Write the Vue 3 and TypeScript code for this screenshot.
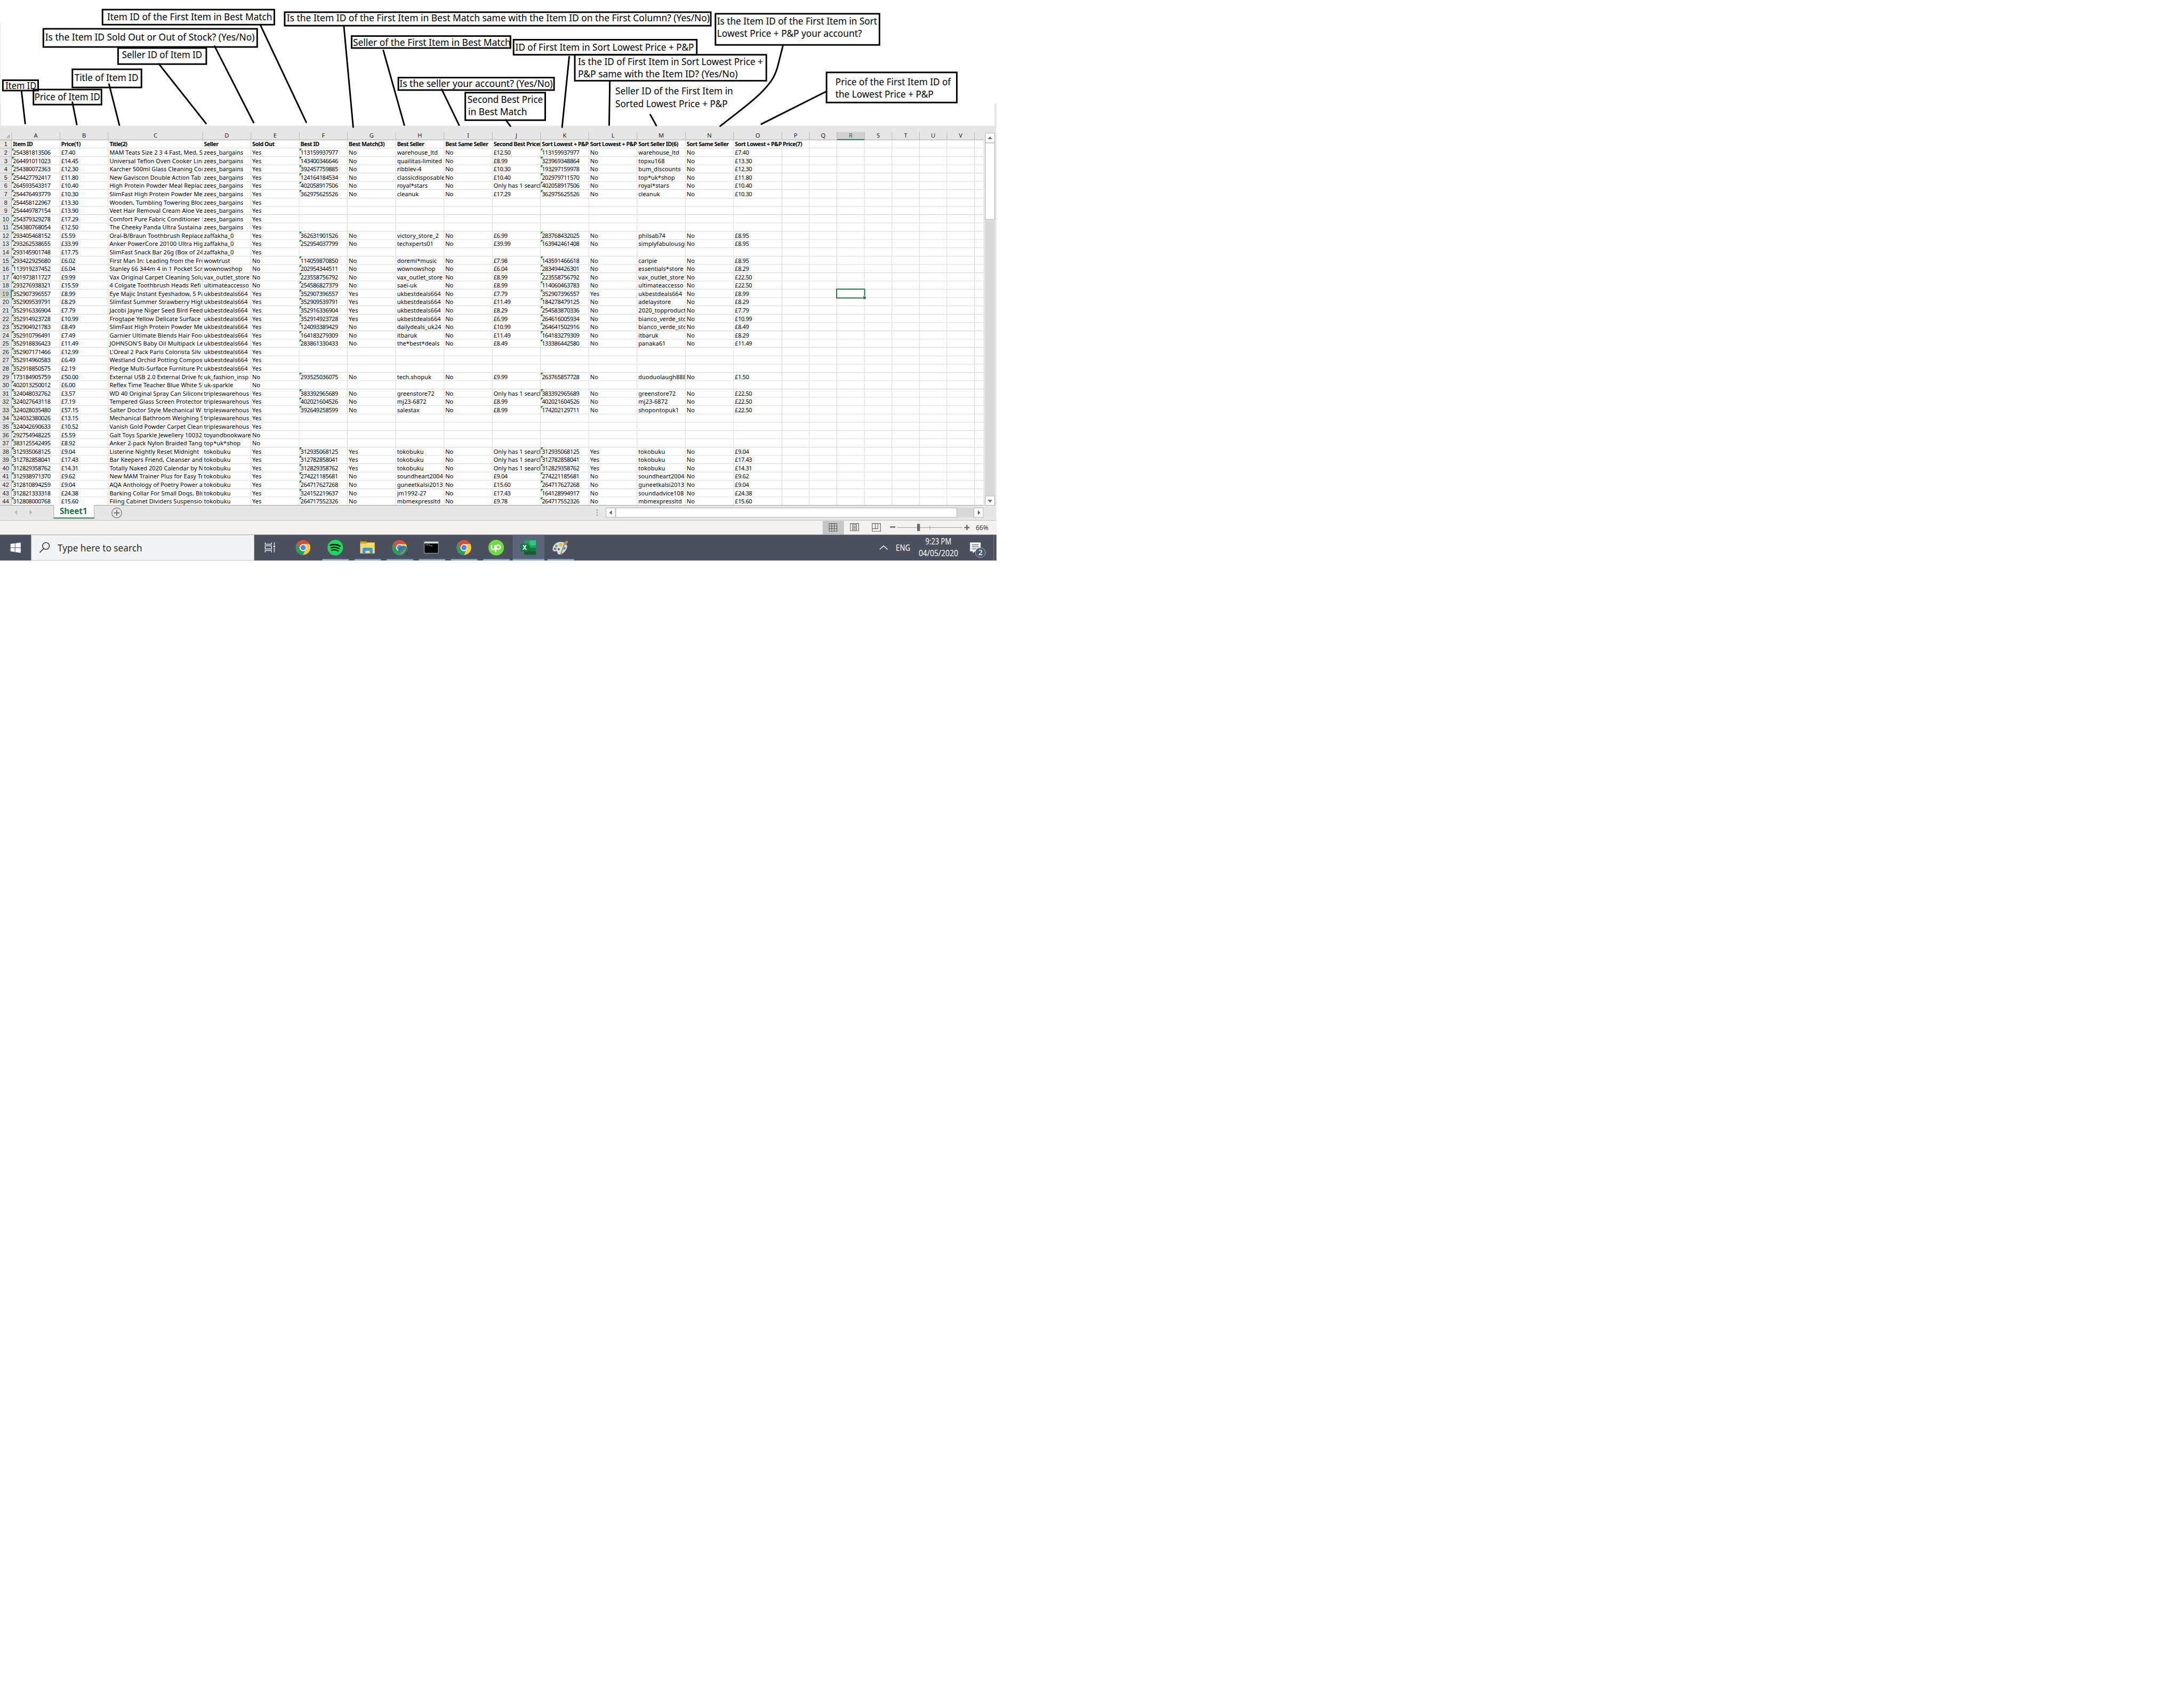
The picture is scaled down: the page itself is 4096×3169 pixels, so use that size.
<script setup lang="ts">
interface Col { name: string; w: number }
interface Note { box?: [number, number, number, number]; lines: [string, number, number, number][] }

const SCALE = 4096 / 4208

const cols: Col[] = [
  { name: 'A', w: 93 }, { name: 'B', w: 93 }, { name: 'C', w: 182 },
  ...'DEFGHIJKLMNO'.split('').map((name) => ({ name, w: 93 })),
  ...'PQRSTUV'.split('').map((name) => ({ name, w: 53 })),
  { name: '', w: 17 },
]

const headings = 'Item ID|Price(1)|Title(2)|Seller|Sold Out|Best ID|Best Match(3)|Best Seller|Best Same Seller|Second Best Price(4)|Sort Lowest + P&P(5)|Sort Lowest + P&P(5)|Sort Seller ID(6)|Sort Same Seller|Sort Lowest + P&P Price(7)'

const source = `254381813506|£7.40|MAM Teats Size 2 3 4 Fast, Med, Slow|zees_bargains|Yes|113159937977|No|warehouse_ltd|No|£12.50|113159937977|No|warehouse_ltd|No|£7.40
264491011023|£14.45|Universal Teflon Oven Cooker Liner|zees_bargains|Yes|143400346646|No|quailitas-limited|No|£8.99|323969348864|No|topxu168|No|£13.30
254380072363|£12.30|Karcher 500ml Glass Cleaning Conc|zees_bargains|Yes|392457759885|No|ribblev-4|No|£10.30|193297159978|No|bum_discounts|No|£12.30
254427792417|£11.80|New Gaviscon Double Action Tab|zees_bargains|Yes|124164184534|No|classicdisposables|No|£10.40|202979711570|No|top*uk*shop|No|£11.80
264593543317|£10.40|High Protein Powder Meal Replace|zees_bargains|Yes|402058917506|No|royal*stars|No|Only has 1 search|402058917506|No|royal*stars|No|£10.40
254476493779|£10.30|SlimFast High Protein Powder Me|zees_bargains|Yes|362975625526|No|cleanuk|No|£17.29|362975625526|No|cleanuk|No|£10.30
254458122967|£13.30|Wooden, Tumbling Towering Blocks|zees_bargains|Yes
254449787154|£13.90|Veet Hair Removal Cream Aloe Vera|zees_bargains|Yes
254379329278|£17.29|Comfort Pure Fabric Conditioner Lily|zees_bargains|Yes
254380768054|£12.50|The Cheeky Panda Ultra Sustaina|zees_bargains|Yes
293405468152|£5.59|Oral-B/Braun Toothbrush Replacement|zaffakha_0|Yes|362631901526|No|victory_store_2|No|£6.99|283768432025|No|philsab74|No|£8.95
293262538655|£33.99|Anker PowerCore 20100 Ultra High|zaffakha_0|Yes|252954037799|No|techxperts01|No|£39.99|163942461408|No|simplyfabulousgifts|No|£8.95
293145901748|£17.75|SlimFast Snack Bar 26g (Box of 24,|zaffakha_0|Yes
293422925680|£6.02|First Man In: Leading from the Front|wowtrust|No|114059870850|No|doremi*music|No|£7.98|143591466618|No|carlpie|No|£8.95
113919237452|£6.04|Stanley 66 344m 4 in 1 Pocket Scre|wownowshop|No|202954344511|No|wownowshop|No|£6.04|283494426301|No|essentials*store|No|£8.29
401973811727|£9.99|Vax Original Carpet Cleaning Solution|vax_outlet_store|No|223558756792|No|vax_outlet_store|No|£8.99|223558756792|No|vax_outlet_store|No|£22.50
293276938321|£15.59|4 Colgate Toothbrush Heads Refi|ultimateaccesso|No|254586827379|No|saei-uk|No|£8.99|114060463783|No|ultimateaccesso|No|£22.50
352907396557|£8.99|Eye Majic Instant Eyeshadow, 5 Pack|ukbestdeals664|Yes|352907396557|Yes|ukbestdeals664|No|£7.79|352907396557|Yes|ukbestdeals664|No|£8.99
352909539791|£8.29|Slimfast Summer Strawberry High|ukbestdeals664|Yes|352909539791|Yes|ukbestdeals664|No|£11.49|184278479125|No|adelaystore|No|£8.29
352916336904|£7.79|Jacobi Jayne Niger Seed Bird Feeder|ukbestdeals664|Yes|352916336904|Yes|ukbestdeals664|No|£8.29|254583870336|No|2020_topproducts|No|£7.79
352914923728|£10.99|Frogtape Yellow Delicate Surface|ukbestdeals664|Yes|352914923728|Yes|ukbestdeals664|No|£6.99|264616005934|No|bianco_verde_store|No|£10.99
352904921783|£8.49|SlimFast High Protein Powder Me|ukbestdeals664|Yes|124093389429|No|dailydeals_uk24|No|£10.99|264641502916|No|bianco_verde_store|No|£8.49
352910796491|£7.49|Garnier Ultimate Blends Hair Food|ukbestdeals664|Yes|164183279309|No|itbaruk|No|£11.49|164183279309|No|itbaruk|No|£8.29
352918836423|£11.49|JOHNSON'S Baby Oil Multipack Le|ukbestdeals664|Yes|283861330433|No|the*best*deals|No|£8.49|133386442580|No|panaka61|No|£11.49
352907171466|£12.99|L'Oreal 2 Pack Paris Colorista Silv|ukbestdeals664|Yes
352914960583|£6.49|Westland Orchid Potting Compost|ukbestdeals664|Yes
352918850575|£2.19|Pledge Multi-Surface Furniture Polish|ukbestdeals664|Yes
173184905759|£50.00|External USB 2.0 External Drive fo|uk_fashion_insp|No|293525036075|No|tech.shopuk|No|£9.99|263765857728|No|duoduolaugh888|No|£1.50
402013250012|£6.00|Reflex Time Teacher Blue White Str|uk-sparkle|No
324048032762|£3.57|WD 40 Original Spray Can Silicone|tripleswarehous|Yes|383392965689|No|greenstore72|No|Only has 1 search|383392965689|No|greenstore72|No|£22.50
324027643118|£7.19|Tempered Glass Screen Protector|tripleswarehous|Yes|402021604526|No|mj23-6872|No|£8.99|402021604526|No|mj23-6872|No|£22.50
324028035480|£57.15|Salter Doctor Style Mechanical W|tripleswarehous|Yes|392649258599|No|salestax|No|£8.99|174202129711|No|shopontopuk1|No|£22.50
324032380026|£13.15|Mechanical Bathroom Weighing Sc|tripleswarehous|Yes
324042690633|£10.52|Vanish Gold Powder Carpet Clean|tripleswarehous|Yes
292754948225|£5.59|Galt Toys Sparkle Jewellery 10032|toyandbookware|No
383125542495|£8.92|Anker 2-pack Nylon Braided Tang|top*uk*shop|No
312935068125|£9.04|Listerine Nightly Reset Midnight|tokobuku|Yes|312935068125|Yes|tokobuku|No|Only has 1 search|312935068125|Yes|tokobuku|No|£9.04
312782858041|£17.43|Bar Keepers Friend, Cleanser and|tokobuku|Yes|312782858041|Yes|tokobuku|No|Only has 1 search|312782858041|Yes|tokobuku|No|£17.43
312829358762|£14.31|Totally Naked 2020 Calendar by N|tokobuku|Yes|312829358762|Yes|tokobuku|No|Only has 1 search|312829358762|Yes|tokobuku|No|£14.31
312938971370|£9.62|New MAM Trainer Plus for Easy Tra|tokobuku|Yes|274221185681|No|soundheart2004|No|£9.04|274221185681|No|soundheart2004|No|£9.62
312810894259|£9.04|AQA Anthology of Poetry Power and|tokobuku|Yes|264717627268|No|guneetkalsi2013|No|£15.60|264717627268|No|guneetkalsi2013|No|£9.04
312821333318|£24.38|Barking Collar For Small Dogs, Blue|tokobuku|Yes|324152219637|No|jm1992-27|No|£17.43|164128994917|No|soundadvice108|No|£24.38
312808000768|£15.60|Filing Cabinet Dividers Suspension|tokobuku|Yes|264717552326|No|mbmexpressltd|No|£9.78|264717552326|No|mbmexpressltd|No|£15.60`

const rows: string[][] = [headings, ...source.split('\n')].map((l) => {
  const cells = l.split('|')
  return cols.map((_, i) => cells[i] ?? '')
})
const isId = (t: string) => /^\d{12}$/.test(t)
const isNum = (t: string) => /^[£\d][\d.]+$/.test(t)

const notes: Note[] = [
  { box: [226, 91, 399, 125], lines: [['Seller ID of Item ID', 235, 389.5, 112]] },
  { box: [82, 54, 497, 92], lines: [['Is the Item ID Sold Out or Out of Stock? (Yes/No)', 87, 490.5, 78]] },
  { box: [196, 17, 530, 49], lines: [['Item ID of the First Item in Best Match', 206.5, 524.5, 39]] },
  { box: [138, 132, 274, 170], lines: [['Title of Item ID', 143.5, 266.5, 156]] },
  { box: [63, 171, 197, 203], lines: [['Price of Item ID', 66.5, 193, 193]] },
  { box: [4, 153, 75, 176], lines: [['Item ID', 10.5, 70, 172]] },
  { box: [547, 22, 1371, 51], lines: [['Is the Item ID of the First Item in Best Match same with the Item ID on the First Column? (Yes/No)', 552.5, 1367.5, 41]] },
  { box: [676, 68, 985, 94], lines: [['Seller of the First Item in Best Match', 680, 984, 88]] },
  { box: [988, 75, 1344, 107], lines: [['ID of First Item in Sort Lowest Price + P&P', 993, 1337, 98]] },
  { box: [1106, 104, 1478, 157], lines: [['Is the ID of First Item in Sort Lowest Price +', 1113.6, 1470, 125], ['P&P same with the Item ID? (Yes/No)', 1113.6, 1421.4, 149]] },
  { lines: [['Seller ID of the First Item in', 1185.6, 1412.3, 182], ['Sorted Lowest Price + P&P', 1185.6, 1402, 206]] },
  { box: [766, 148, 1069, 175], lines: [['Is the seller your account? (Yes/No)', 769.7, 1065, 167]] },
  { box: [895, 177, 1052, 233], lines: [['Second Best Price', 901, 1046, 198], ['in Best Match', 902, 1015.6, 222]] },
  { box: [1377, 25, 1696, 88], lines: [['Is the Item ID of the First Item in Sort', 1381.5, 1690, 47], ['Lowest Price + P&P your account?', 1381.5, 1660.6, 71]] },
  { box: [1591, 138, 1845, 199], lines: [['Price of the First Item ID of', 1609.6, 1832, 164], ['the Lowest Price + P&P', 1609.6, 1798.6, 188]] },
]

const pointers = [
  'M41.5 176L48.5 238', 'M139.5 197L148 240', 'M210 162L230 241', 'M306 123L397 238', 'M413.5 89L488.5 236',
  'M502 49L590 235.5', 'M662.5 50L680.5 245', 'M738.5 97L779 241', 'M851 172L884.5 241', 'M974.5 231L983.5 243',
  'M1096.7 109L1083 245', 'M1175 157L1173.7 241', 'M1253 221L1264.5 242',
  'M1508.5 88L1499.7 123C1494 147 1486 158 1470 175C1455 191 1430 210 1387.5 243', 'M1592.6 176L1467 239',
]

const vFit = {
  mounted(el: HTMLElement, b: { value: number }) {
    el.style.transform = `scaleX(${b.value / el.offsetWidth})`
  },
}
</script>

<template>
  <div class="stage" :style="{ transform: `scale(${SCALE})` }">
    <main class="desktop">
      <section class="canvas">
        <svg class="notes" width="1920" height="250" viewBox="0 0 1920 250">
          <g v-for="(n, i) in notes" :key="i">
            <text v-for="l in n.lines" :key="l[0]" :x="l[1]" :y="l[3]" :textLength="l[2] - l[1]" lengthAdjust="spacingAndGlyphs">{{ l[0] }}</text>
            <rect v-if="n.box" :x="n.box[0] + 1.5" :y="n.box[1] + 1.5" :width="n.box[2] - n.box[0] - 3" :height="n.box[3] - n.box[1] - 3" />
          </g>
          <path v-for="p in pointers" :key="p" :d="p" />
        </svg>
      </section>

      <section class="workbook">
        <div class="sheet">
          <div class="head">
            <div class="corner"><i></i></div>
            <div v-for="c in cols" :key="c.name" class="colname" :class="{ on: c.name === 'R', last: !c.name }" :style="{ width: c.w + 'px' }">{{ c.name }}</div>
          </div>
          <div v-for="(r, ri) in rows" :key="ri" class="row" :class="{ first: ri === 0 }">
            <div class="rownum" :class="{ on: ri === 18 }">{{ ri + 1 }}</div>
            <div v-for="(t, ci) in r" :key="ci" class="cell" :class="{ id: isId(t), num: isNum(t), spill: ri === 0 && ci === 14, last: ci === cols.length - 1 }" :style="{ width: cols[ci].w + 'px' }">
              <span v-if="t">{{ t }}</span>
              <div v-if="ri === 18 && ci === 17" class="cursor"></div>
            </div>
          </div>
        </div>
        <div class="vscroll">
          <div class="btn"><svg width="17" height="17"><path d="M4 11h9L8.500 6z" /></svg></div>
          <div class="vthumb"></div>
          <div class="track"></div>
          <div class="btn"><svg width="17" height="17"><path d="M4 7h9L8.500 12z" /></svg></div>
        </div>
      </section>

      <section class="tabs">
        <svg class="nav" width="103" height="28"><path d="M33 8v10l-5-5zM57 8v10l5-5z" /></svg>
        <div class="tab"><span v-fit="53">Sheet1</span></div>
        <svg class="add" width="22" height="22"><circle cx="11" cy="11" r="9.500" /><path d="M11 5.500v11M5.500 11h11" /></svg>
        <div class="dots"><i></i><i></i><i></i></div>
        <div class="hscroll">
          <div class="btn"><svg width="17" height="17"><path d="M11 4v9L6 8.500z" /></svg></div>
          <div class="hthumb"></div>
          <div class="track"></div>
          <div class="btn"><svg width="17" height="17"><path d="M7 4v9l5-4.500z" /></svg></div>
        </div>
      </section>

      <section class="status">
        <svg width="336" height="27" viewBox="1584 1003 336 27">
          <path fill="#c6c6c6" d="M1585 1003h41v27h-41z" />
          <g fill="none" stroke="#666" stroke-width="1.200">
            <path d="M1597.500 1008.500h15v15h-15zM1602.500 1008v16M1607.500 1008v16M1597 1013.500h16M1597 1018.500h16" />
            <path d="M1638.500 1008.500h16v14h-16zM1642.500 1010.500h8v10h-8zM1644 1013.500h5M1644 1015.500h5M1644 1017.500h5" />
            <path d="M1680.500 1008.500h16v15h-16zM1680.500 1018.500h11v-10M1686.500 1008.500v10" />
            <path stroke="#a6a6a6" d="M1729 1016.500h125M1791.500 1013v7" />
          </g>
          <path fill="#6a6a6a" d="M1715 1014h10v2.500h-10zM1767 1009h5.500v14h-5.500zM1858 1015h10v2.500h-10zM1861.800 1011.200h2.500v10h-2.500z" />
          <text x="1880" y="1021.500" textLength="24.500" lengthAdjust="spacingAndGlyphs">66%</text>
        </svg>
      </section>

      <footer class="taskbar">
        <div class="start"><svg width="20" height="20" viewBox="0 0 20 20"><path d="M0 3l8.500-1.300V9.500H0zM9.500 1.500L20 0v9.500H9.500zM0 10.500h8.500v7.800L0 17zM9.500 10.500H20V20L9.500 18.500z" /></svg></div>
        <div class="search">
          <svg width="22" height="22" viewBox="0 0 22 22"><circle cx="13.500" cy="7.800" r="6.600" /><path d="M9 12.800L1.500 20.500" /></svg>
          <span v-fit="163">Type here to search</span>
        </div>
        <svg class="apps" width="1430" height="50" viewBox="490 1030 1430 50">
          <defs>
            <g id="chrome">
              <circle r="14" fill="#fbc93d" />
              <path fill="#dc4a3d" d="M-12.100 -7A14 14 0 0 1 12.100 -7H0A7 7 0 0 0 -6.100 3.500z" />
              <path fill="#1da362" d="M-12.100 -7L-6.100 3.500A7 7 0 0 0 3.500 6.100L0 14A14 14 0 0 1 -12.100 -7z" />
              <circle r="6.500" fill="#f4f4f4" /><circle r="5" fill="#4a86ee" />
            </g>
            <linearGradient id="av" x1="0" y1="0" x2="1" y2="1"><stop offset="0" stop-color="#2c6f7a" /><stop offset=".5" stop-color="#3d8d90" /><stop offset="1" stop-color="#2b2230" /></linearGradient>
          </defs>
          <path fill="#5b657a" d="M988 1030h61v50h-61z" />
          <g fill="#94a9cf">
            <path d="M621 1077h51v3h-51zM683 1077h51v3h-51zM745 1077h51v3h-51zM807 1077h51v3h-51zM869 1077h51v3h-51zM931 1077h51v3h-51zM988 1077h61v3h-61zM1055 1077h51v3h-51z" />
          </g>
          <g fill="none" stroke="#e8eaec" stroke-width="1.500">
            <path d="M511 1045v3.500h12v-3.500M511 1064v-3.500h12v3.500M511 1051.500h12v6h-12zM528.500 1045v5M528.500 1055v9" />
          </g>
          <path fill="#fff" d="M527 1051h3v3h-3z" />
          <use href="#chrome" x="584" y="1055" />
          <circle cx="646" cy="1055" r="15" fill="#1ed760" />
          <g fill="none" stroke="#111" stroke-linecap="round">
            <path stroke-width="2.800" d="M636.800 1050.200q10-3 18.400 1.800" /><path stroke-width="2.400" d="M637.800 1055.300q8.500-2.500 15.500 1.600" /><path stroke-width="2" d="M638.800 1060q7-2 13 1.500" />
          </g>
          <path fill="#dd9f10" d="M694 1043h12.500v6H694z" /><path fill="#ffd767" d="M694 1047h11l2.500-2H722v21h-28z" />
          <path fill="#3a95e0" d="M698.500 1066v-7.500q0-3.500 3.500-3.500h12.500q3.500 0 3.500 3.500v7.500h-5.500v-5h-8.500v5z" />
          <use href="#chrome" x="770" y="1055" />
          <circle cx="777" cy="1061.500" r="10" fill="url(#av)" /><path fill="#c97f4f" d="M771 1066q6-3 11-9q-1 8-9 11z" />
          <path fill="#a9abad" d="M817 1043h28v23h-28z" /><path fill="#060606" d="M818 1047h26v18h-26z" /><path fill="#e2e2e2" d="M818 1044h26v2.500h-26z" />
          <path fill="none" stroke="#ccc" d="M820 1049.500h2.500M824 1048.500v3M826.500 1048.500l1.500 3M829 1051.500h4" />
          <use href="#chrome" x="894" y="1055" />
          <circle cx="956" cy="1055" r="15" fill="#6fda44" />
          <path fill="none" stroke="#fff" stroke-width="2.500" d="M947.200 1050v5.500q0 3.200 3.200 3.200t3.200-3.200V1050q2.500 8 6.500 8a3.900 3.900 0 1 0-3.900-4.500l-1.500 9.500" />
          <path fill="#21a366" d="M1010 1041h22.500v28H1010z" /><path fill="#33c481" d="M1021 1041h11.500v9.500H1021z" /><path fill="#107c41" d="M1010 1050.500h11v9h-11z" /><path fill="#185c37" d="M1010 1059.500h22.500v9.500H1010z" /><path fill="#107c41" d="M1021 1055h11.500v7H1021z" /><rect x="1003" y="1047" width="15.500" height="15.500" rx="1" fill="#0f7c40" />
          <text class="x" x="1010.700" y="1059.200" text-anchor="middle">X</text>
          <path fill="#cbe5f5" stroke="#7ca9c9" stroke-width=".8" d="M1080 1044c-10 0-15.500 8-15 15c.4 4 4 3 6.500 2.500c3 0 2 4 4 6c5 3 16-5 17-14c.4-6-5-9.500-12.500-9.500z" />
          <circle cx="1072" cy="1052" r="2.500" fill="#63b345" /><circle cx="1080" cy="1049" r="3.500" fill="#f2b632" /><circle cx="1069.500" cy="1057.500" r="2.300" fill="#d9483b" /><circle cx="1076.500" cy="1058" r="2" fill="#4a515c" /><circle cx="1087" cy="1056" r="2.800" fill="#4a8fe0" />
          <path stroke="#d98b34" stroke-width="2.600" stroke-linecap="round" d="M1080.500 1067.500L1087 1049" /><path stroke="#b88a5f" stroke-width="5" stroke-linecap="round" d="M1089 1047.500l2.500-3.500" />
          <path fill="none" stroke="#fff" stroke-width="1.500" d="M1695 1058.500l7.500-7 7.500 7" />
          <g class="tray">
            <text x="1726" y="1061" textLength="28" lengthAdjust="spacingAndGlyphs">ENG</text>
            <text x="1783" y="1049" textLength="50" lengthAdjust="spacingAndGlyphs">9:23 PM</text>
            <text x="1770" y="1072" textLength="76" lengthAdjust="spacingAndGlyphs">04/05/2020</text>
          </g>
          <path fill="#fff" d="M1869 1045h20.500v17h-11l-4 3.500v-3.500h-5.500z" /><path stroke="#4a515c" stroke-width="1.300" d="M1872.500 1049.500h13M1872.500 1053.500h13M1872.500 1057.500h9" />
          <circle cx="1889" cy="1064.600" r="9.600" fill="#4b586b" stroke="#a5b0bf" />
          <text class="badge" x="1889" y="1069.800" text-anchor="middle">2</text>
          <path stroke="#7d838c" d="M1914.500 1030v50" />
        </svg>
      </footer>
    </main>
  </div>
</template>

<style>
html, body { margin: 0; background: #fff; overflow: hidden; }
</style>

<style scoped>
.stage { width: 4208px; height: 3256px; transform-origin: 0 0; background: #fff; font-family: "Noto Sans", "Open Sans", sans-serif; color: #000; }
.desktop { width: 1920px; height: 1080px; display: flex; flex-direction: column; overflow: hidden; }
.canvas { position: relative; z-index: 2; height: 242px; box-sizing: border-box; flex: none; background: linear-gradient(#f2f2f2, #f2f2f2) 0 43px / 2px 156px no-repeat, linear-gradient(#e6e6e6, #e6e6e6) 0 199px / 2px 43px no-repeat, linear-gradient(#e6e6e6, #e6e6e6) 1916px 199px / 4px 43px no-repeat; }
.notes { display: block; overflow: visible; }
.notes text { font-size: 18.3px; fill: #000; }
.notes rect { fill: none; stroke: #000; stroke-width: 3; }
.notes path { fill: none; stroke: #000; stroke-width: 3; stroke-linecap: round; }

.workbook { display: flex; height: 732px; flex: none; background: #e6e6e6; padding-top: 12px; box-sizing: border-box; }
.sheet { width: 1895px; height: 720px; display: flex; flex-direction: column; box-sizing: border-box; border-bottom: 1px solid #999; overflow: hidden; }
.head { display: flex; height: 16px; flex: none; }
.corner { width: 23px; height: 16px; box-sizing: border-box; border-right: 1px solid #b5b5b5; border-bottom: 1px solid #999; display: flex; justify-content: flex-end; align-items: flex-end; padding: 0 3px 3px 0; }
.corner i { border-left: 8px solid transparent; border-bottom: 8px solid #b8b8b8; }
.colname { box-sizing: border-box; height: 16px; flex: none; border-right: 1px solid #b5b5b5; border-bottom: 1px solid #999; font: 11.5px/14px "Noto Sans", sans-serif; text-align: center; color: #222; }
.colname.on { background: #d2d2d2; border-bottom: 2px solid #217346; color: #217346; }
.colname.last { width: 17px; border-right: 0; }
.row { display: flex; height: 16px; flex: none; }
.rownum { width: 23px; height: 16px; flex: none; box-sizing: border-box; border-right: 1px solid #999; border-bottom: 1px solid #bdbdbd; font: 11.3px/16px "Liberation Sans", sans-serif; text-align: center; color: #222; }
.rownum.on { background: #d2d2d2; color: #217346; border-right: 2px solid #217346; }
.cell { position: relative; height: 16px; flex: none; box-sizing: border-box; background: #fff; border-right: 1px solid #d2d2d2; border-bottom: 1px solid #d2d2d2; font-size: 11.3px; line-height: 16px; letter-spacing: .08px; padding-left: 2px; white-space: nowrap; overflow: hidden; }
.cell.last { border-right: 0; }
.cell.num { letter-spacing: -.45px; }
.first .cell { font-weight: 700; font-size: 11px; letter-spacing: -.5px; }
.first .cell.spill { overflow: visible; border-right-color: #fff; z-index: 1; }
.id::before { content: ''; position: absolute; left: 0; top: 0; border-top: 5px solid #107c10; border-right: 5px solid transparent; }
.cell:has(.cursor) { overflow: visible; z-index: 3; }
.cursor { position: absolute; left: -2px; top: -2px; width: 52px; height: 15px; border: 2px solid #217346; }
.cursor::after { content: ''; position: absolute; right: -3px; bottom: -3px; width: 5px; height: 5px; background: #217346; border: 1px solid #fff; border-right: 0; border-bottom: 0; }

.btn { background: #fff; border: 1px solid #ababab; box-sizing: border-box; width: 19px; height: 19px; flex: none; }
.btn svg { display: block; fill: #666; }
.track { background: #dadada; flex: 1; }
.vscroll { margin: 2px 3px 0 3px; width: 19px; display: flex; flex-direction: column; }
.vthumb { height: 148px; box-sizing: border-box; border: 1px solid #ababab; background: #fff; }

.tabs { height: 29px; flex: none; box-sizing: border-box; background: #e6e6e6; border-bottom: 1px solid #c2c2c2; display: flex; position: relative; }
.nav { fill: #b9b9b9; flex: none; }
.tab { width: 79px; height: 26px; margin-top: -1px; flex: none; box-sizing: border-box; background: #fff; border: 1px solid #aaa; border-top: 0; border-bottom: 2px solid #217346; padding-left: 11px; color: #217346; font-weight: 700; font-size: 16.8px; line-height: 22px; }
.tab span { display: inline-block; transform-origin: 0 0; }
.add { margin: 3px 0 0 32px; fill: none; stroke: #777; stroke-width: 1.2; }
.add path { stroke-width: 2; }
.dots { margin: 7px 15px 0 auto; display: flex; flex-direction: column; gap: 2px; width: 3px; }
.dots i { height: 3px; background: #b5b5b5; }
.hscroll { width: 728px; height: 19px; margin: 4px 25px 0 0; display: flex; }
.hthumb { width: 658px; box-sizing: border-box; border: 1px solid #ababab; background: #fff; }

.status { height: 27px; flex: none; background: #f3f2f1; display: flex; justify-content: flex-end; }
.status text { font-size: 13.5px; fill: #444; }

.taskbar { height: 50px; flex: none; background: #4a515c; display: flex; }
.start { width: 60px; display: flex; align-items: center; justify-content: center; fill: #fff; }
.search { width: 430px; height: 50px; box-sizing: border-box; background: #f3f4f6; border: 1px solid #bdbdbd; display: flex; align-items: center; padding-left: 14px; color: #2b2b2b; font-size: 18.8px; }
.search svg { fill: none; stroke: #222; stroke-width: 1.5; flex: none; }
.search span { display: inline-block; margin-left: 14px; transform-origin: 0 50%; white-space: nowrap; }
.apps { display: block; flex: none; }
.tray text { font-size: 16px; fill: #fff; }
.x { font-size: 12px; font-weight: 700; fill: #fff; }
.badge { font-size: 14.5px; font-weight: 500; fill: #fff; }
</style>
